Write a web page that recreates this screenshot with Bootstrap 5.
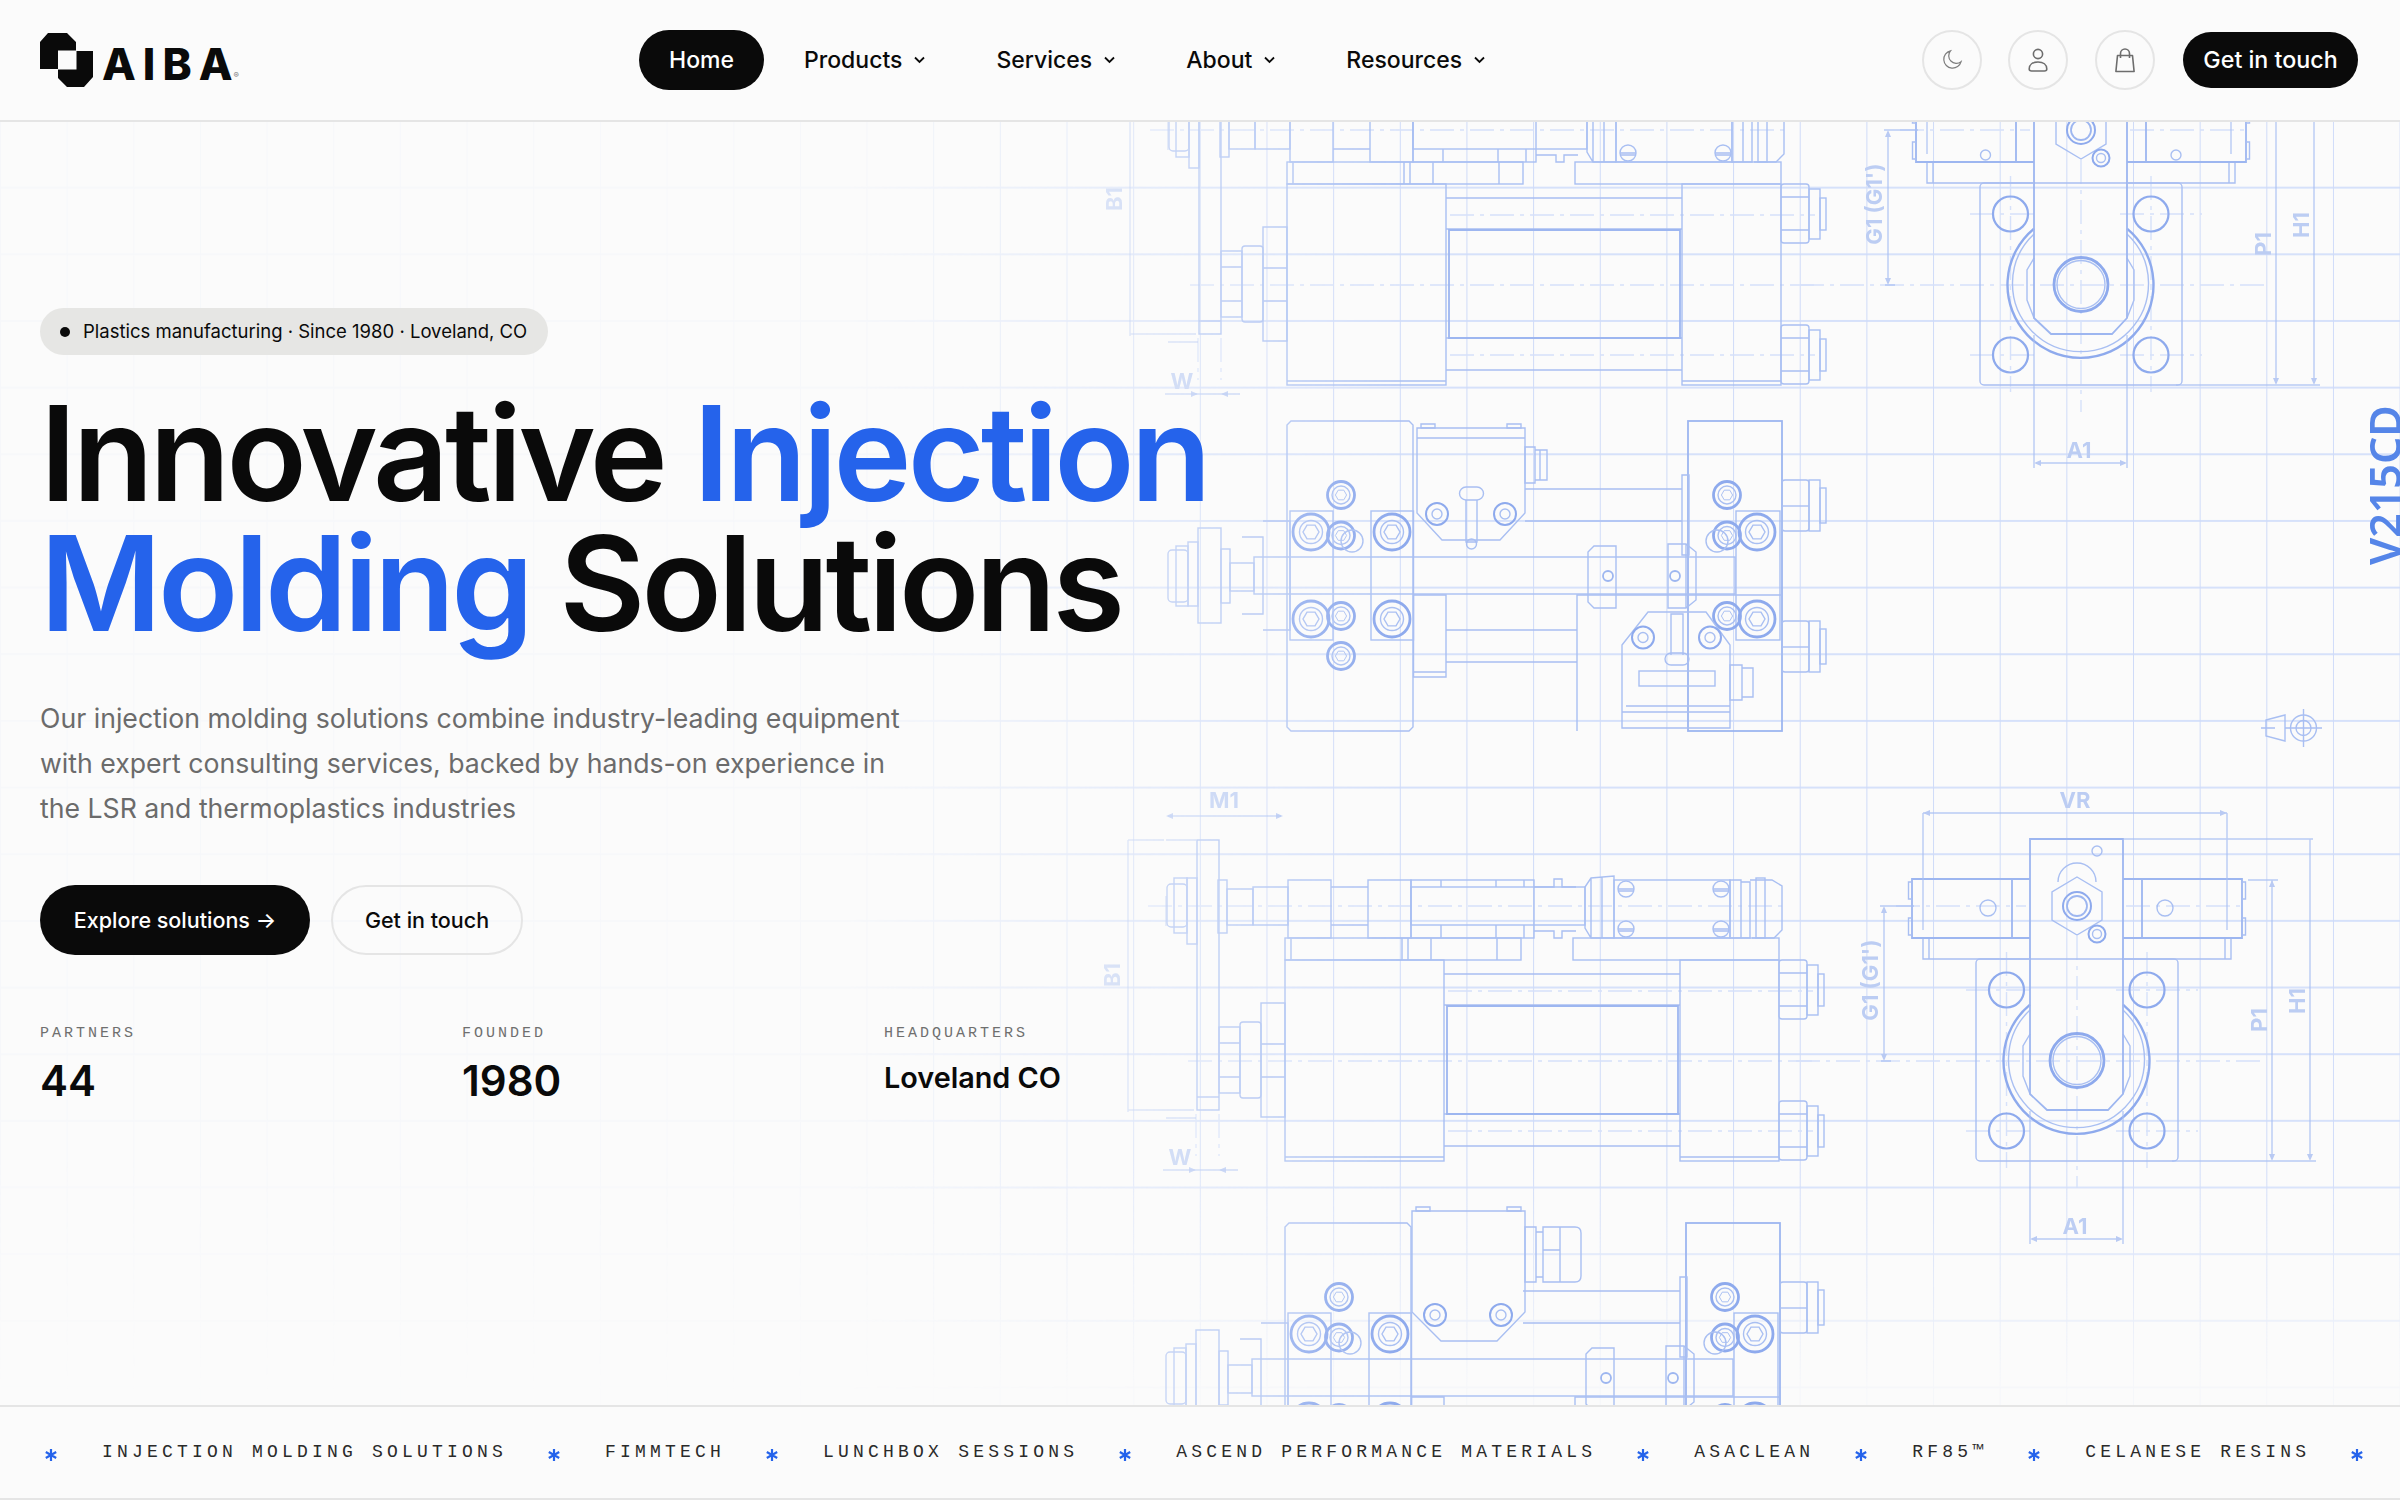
<!DOCTYPE html>
<html lang="en">
<head>
  <meta charset="UTF-8">
  <title>Aiba - Injection Molding Solutions</title>
  <link href="https://cdn.jsdelivr.net/npm/bootstrap@5.3.0/dist/css/bootstrap.min.css" rel="stylesheet">
  <style>
    body { background: #fbfbfb; color: #0a0a0a; font-family: "Inter", "Liberation Sans", sans-serif; overflow: hidden; height: 1500px; }

    .site-nav { height: 122px; border-bottom: 2px solid #e5e5e5; padding: 0 42px 0 40px; flex-wrap: nowrap; }
    .brand-box { width: 599px; gap: 8px; color: #0a0a0a; text-decoration: none; }
    .brand-word { font-size: 44px; font-weight: 800; letter-spacing: 7px; line-height: 44px; margin-top: 8px; }
    .brand-last { letter-spacing: 0; }
    .brand-reg { font-size: 8px; color: #777; letter-spacing: 0; margin-left: -7px; margin-top: 30px; }
    .menu-list { gap: 10px; }
    .navbar-expand .navbar-nav .menu-link { font-size: 23px; font-weight: 500; color: #0a0a0a; height: 60px; padding: 0 30px; border-radius: 30px; gap: 11px; }
    .navbar-expand .navbar-nav .menu-link.is-current { background: #0a0a0a; color: #fff; }
    .round-btn { width: 60px; height: 60px; border: 2px solid #e5e5e5; border-radius: 50%; background: transparent; padding: 0; }
    .tool-group { gap: 26.5px; }
    .btn-ink { background: #0a0a0a; color: #fff; border: 0; font-weight: 500; }
    .btn-ink:hover { background: #0a0a0a; color: #fff; }
    .btn-hollow { background: transparent; color: #0a0a0a; border: 2px solid #e5e5e5; font-weight: 500; }
    .nav-cta { width: 175px; height: 56px; font-size: 23.25px; padding: 0; margin-left: 2px; }

    .hero-area { position: relative; height: 1283px; overflow: hidden; padding: 186px 0 0 40px; }
    .plan-layer { position: absolute; inset: 0; -webkit-mask-image: linear-gradient(to right, rgba(0,0,0,.1) 850px, rgba(0,0,0,.65) 1180px, #000 1400px); mask-image: linear-gradient(to right, rgba(0,0,0,.1) 850px, rgba(0,0,0,.65) 1180px, #000 1400px); }
    .plan-grid { position: absolute; inset: 0; background-image: linear-gradient(to right, #cfdbf8 1px, transparent 1px), linear-gradient(to bottom, #d6e1fa 1.5px, transparent 1.5px); background-size: 66.67px 66.67px; background-position: 0 -2px; -webkit-mask-image: linear-gradient(to bottom, #000 1040px, rgba(0,0,0,.12) 1260px); mask-image: linear-gradient(to bottom, #000 1040px, rgba(0,0,0,.12) 1260px); }
    .plan-svg { position: absolute; left: 0; top: 0; }
    .bl { fill: none; stroke: #a9bff2; stroke-width: 1.4; }
    .bm { fill: none; stroke: #9db6f0; stroke-width: 1.8; }
    .bh { fill: none; stroke: #8eaaed; stroke-width: 2.8; }
    .bd { fill: none; stroke: #d6e1fa; stroke-width: 1.4; stroke-dasharray: 24 6 4 6; }
    .bf { fill: #b9caf3; stroke: none; }
    .bt { fill: #bccdf3; font-family: "Inter", "Liberation Sans", sans-serif; font-weight: 700; font-size: 22px; }
    .bn { fill: #5585e8; font-family: "Noto Sans", "Liberation Sans", sans-serif; font-weight: 600; font-size: 43px; }

    .hero-copy { position: relative; }
    .chip-tag { height: 47px; background: #e6e6e4; border-radius: 24px; padding: 0 20px; gap: 13px; font-size: 18.5px; color: #0a0a0a; width: 508px; white-space: nowrap; }
    .chip-dot { width: 10px; height: 10px; border-radius: 50%; background: #0a0a0a; flex: none; }
    .hero-title { font-size: 132px; font-weight: 600; line-height: 130px; letter-spacing: -3.85px; margin: 33px 0 0 0; white-space: nowrap; }
    .tone-blue { color: #2563eb; }
    .hero-text { font-size: 26.67px; line-height: 45px; color: #6b6b6b; width: 875px; margin: 48px 0 0 0; }
    .hero-actions { gap: 21px; margin-top: 54px; }
    .btn-big { height: 70px; font-size: 21.5px; padding: 0; }
    .btn-explore { width: 270px; }
    .btn-touch { width: 192px; }
    .stat-row { margin-top: 69px; }
    .stat-cell { width: 422px; }
    .stat-label { font-family: "Liberation Mono", monospace; font-size: 15px; letter-spacing: 3px; color: #6f6f6f; line-height: 20px; }
    .stat-value { font-size: 42px; font-weight: 600; line-height: 50px; margin-top: 12px; }
    .stat-value.is-place { font-size: 28.8px; margin-top: 9px; }

    .ticker-band { height: 95px; border-top: 2px solid #e5e5e5; border-bottom: 2px solid #e5e5e5; overflow: hidden; background: #fbfbfb; position: relative; }
    .ticker-track { margin-left: -221px; height: 100%; white-space: nowrap; }
    .ticker-item { font-family: "Liberation Mono", monospace; font-size: 18px; letter-spacing: 4.2px; color: #2a2a2a; }
    .ticker-star { width: 12px; height: 12px; margin: 4px 45px 0 41px; flex: none; }
  </style>
</head>
<body>

<nav class="navbar navbar-expand site-nav">
  <a class="d-flex align-items-center brand-box" href="#">
    <svg width="54" height="56" viewBox="40 32 54 56">
      <polygon fill="#0a0a0a" points="40,42 48,33 67,33 76,42 76,50.5 58,50.5 58,69 40,69"/>
      <polygon fill="#0a0a0a" points="76.5,51 93,51 93,77 84,87 67,87 58,78 58,69.5 76.5,69.5"/>
    </svg>
    <span class="brand-word">AIB<span class="brand-last">A</span></span><span class="brand-reg">®</span>
  </a>
  <ul class="navbar-nav menu-list">
    <li class="nav-item"><a class="nav-link d-flex align-items-center menu-link is-current" href="#">Home</a></li>
    <li class="nav-item"><a class="nav-link d-flex align-items-center menu-link" href="#">Products <svg width="13" height="8" viewBox="0 0 13 8"><path d="M2 1.5l4.500 4.500 4.500-4.500" fill="none" stroke="#0a0a0a" stroke-width="1.8"/></svg></a></li>
    <li class="nav-item"><a class="nav-link d-flex align-items-center menu-link" href="#">Services <svg width="13" height="8" viewBox="0 0 13 8"><path d="M2 1.5l4.500 4.500 4.500-4.500" fill="none" stroke="#0a0a0a" stroke-width="1.8"/></svg></a></li>
    <li class="nav-item"><a class="nav-link d-flex align-items-center menu-link" href="#">About <svg width="13" height="8" viewBox="0 0 13 8"><path d="M2 1.5l4.500 4.500 4.500-4.500" fill="none" stroke="#0a0a0a" stroke-width="1.8"/></svg></a></li>
    <li class="nav-item"><a class="nav-link d-flex align-items-center menu-link" href="#">Resources <svg width="13" height="8" viewBox="0 0 13 8"><path d="M2 1.5l4.500 4.500 4.500-4.500" fill="none" stroke="#0a0a0a" stroke-width="1.8"/></svg></a></li>
  </ul>
  <div class="d-flex align-items-center ms-auto tool-group">
    <button class="round-btn d-flex align-items-center justify-content-center" type="button" aria-label="Theme">
      <svg width="22" height="22" viewBox="0 0 22 22"><path d="M9.5 1.8a8.8 8.8 0 1 0 10.6 10.8A7.6 7.6 0 0 1 9.500 1.800z" fill="none" stroke="#7d7d7d" stroke-width="1.2"/></svg>
    </button>
    <button class="round-btn d-flex align-items-center justify-content-center" type="button" aria-label="Account">
      <svg width="20" height="25" viewBox="0 0 20 25"><circle cx="10" cy="6" r="4.6" fill="none" stroke="#6d6d6d" stroke-width="1.6"/><path d="M1.2 21c0-4.400 3.600-7 8.800-7s8.800 2.600 8.800 7c0 1.600-1 2-2.400 2H3.600c-1.400 0-2.400-.4-2.400-2z" fill="none" stroke="#6d6d6d" stroke-width="1.6"/></svg>
    </button>
    <button class="round-btn d-flex align-items-center justify-content-center" type="button" aria-label="Cart">
      <svg width="22" height="25" viewBox="0 0 22 25"><path d="M3.500 7.500h15l1.600 16H1.900z" fill="none" stroke="#6d6d6d" stroke-width="1.6" stroke-linejoin="round"/><path d="M6.500 10V5.500a4.500 4.500 0 0 1 9 0V10" fill="none" stroke="#6d6d6d" stroke-width="1.6"/></svg>
    </button>
    <a class="btn btn-ink rounded-pill nav-cta d-flex align-items-center justify-content-center" href="#">Get in touch</a>
  </div>
</nav>

<section class="hero-area">
  <div class="plan-layer">
    <div class="plan-grid"></div>
    <svg class="plan-svg" width="2400" height="1283" viewBox="0 122 2400 1283">
      <defs>
        <polygon id="hexHead" points="8,0 4,6.900 -4,6.900 -8,0 -4,-6.900 4,-6.900"/>
        <g id="boltBig"><circle r="18" class="bh"/><circle r="11.5" class="bl"/><use href="#hexHead" class="bl"/></g>
        <g id="boltSmall"><circle r="13.5" class="bh"/><circle r="9" class="bl"/><use href="#hexHead" class="bl" transform="scale(.7)"/></g>
        <g id="nutSide"><rect width="28" height="59" rx="3" class="bl"/><path d="M0 13h28M0 46h28" class="bl"/><rect x="28" y="5" width="11" height="50" class="bl"/><rect x="39" y="14" width="6" height="32" class="bl"/></g>
        <g id="nutTop"><rect width="27" height="51" rx="3" class="bl"/><path d="M0 26h27" class="bl"/><rect x="27" width="11" height="51" class="bl"/><rect x="38" y="8" width="6" height="35" class="bl"/></g>
        <g id="slotScrew"><circle r="8" class="bl"/><path d="M-8 0H8M-8 2H8" class="bl"/></g>
        <g id="valveBolt"><circle r="11" class="bh" style="stroke-width:2"/><circle r="5" class="bl"/></g>

        <!-- side view, upper valve + cylinder -->
        <g id="sideView">
          <path class="bd" d="M1150 130H1790M1190 285H1815M1450 215H1815M1450 355H1815"/>
          <rect class="bl" x="1199" y="64" width="22" height="270"/>
          <path class="bl" d="M1199 321h22"/>
          <rect class="bl" x="1169" y="108" width="20" height="43" rx="4"/>
          <rect class="bl" x="1176" y="102" width="13" height="55"/>
          <rect class="bl" x="1189" y="102" width="10" height="66"/>
          <rect class="bl" x="1220" y="104" width="9" height="53"/>
          <rect class="bl" x="1229" y="113" width="26" height="36"/>
          <rect class="bl" x="1255" y="111" width="35" height="38"/>
          <rect class="bl" x="1290" y="104" width="43" height="58"/>
          <path class="bl" d="M1333 111h37M1333 149h37"/>
          <rect class="bl" x="1370" y="104" width="43" height="58"/>
          <rect class="bl" x="1413" y="104" width="123" height="58"/>
          <rect class="bl" x="1413" y="111" width="174" height="38"/>
          <path class="bl" d="M1443 104v7M1443 149v13M1498 104v7M1498 149v13M1526 104v7M1526 149v13M1536 111h20v-8h8v8h14M1536 155h20v7h8v-7h14"/>
          <path class="bl" d="M1587 111l6-9 23-2v62h-23l-6-10zM1593 102v60M1604 101v61"/>
          <rect class="bl" x="1616" y="104" width="116" height="58"/>
          <use href="#slotScrew" x="1628" y="113"/><use href="#slotScrew" x="1628" y="153"/>
          <use href="#slotScrew" x="1723" y="113"/><use href="#slotScrew" x="1723" y="153"/>
          <path class="bl" d="M1732 104h11v58h-11zM1743 106h9v56h-9zM1752 104h22l10 6v44l-8 8h-22"/>
          <rect class="bl" x="1758" y="102" width="9" height="60"/>

          <rect class="bl" x="1287" y="162" width="236" height="22"/>
          <path class="bl" d="M1293 162v22M1404 162v22M1410 162v22M1433 162v22M1499 162v22"/>
          <rect class="bl" x="1575" y="162" width="206" height="22"/>
          <rect class="bl" x="1287" y="184" width="159" height="201"/>
          <path class="bl" d="M1287 381h159"/>
          <rect class="bl" x="1682" y="184" width="99" height="201"/>
          <path class="bl" d="M1682 381h99M1446 198h236M1446 229h236M1446 338h236M1446 370h236"/>
          <path class="bm" d="M1449 230h231v108h-231z"/>
          <rect class="bl" x="1263" y="227" width="24" height="114"/>
          <path class="bl" d="M1263 268h24M1263 301h24"/>
          <rect class="bl" x="1242" y="246" width="21" height="76" rx="3"/>
          <rect class="bl" x="1221" y="251" width="21" height="66"/>
          <path class="bl" d="M1221 267h21M1221 301h21"/>
          <use href="#nutSide" x="1781" y="184"/><use href="#nutSide" x="1781" y="325"/>
          <path class="bd" d="M1198 338V380M1221 338V380"/>
          <path class="bl" style="opacity:.6" d="M1168 120v30M1168 64h30M1168 342h30"/>
          <path class="bf" d="M1198 394l-7-3v6zM1221 394l7-3v6zM1168 40l7-3v6zM1285 40l-7-3v6z"/>
          <path class="bl" style="opacity:.7" d="M1170 40h113M1165 394h75"/>
          <text class="bt" x="1226" y="32" text-anchor="middle">M1</text>
          <text class="bt" x="1182" y="389" text-anchor="middle">W</text>
          <text class="bt" transform="translate(1122 199) rotate(-90)" text-anchor="middle">B1</text>
          <path class="bl" style="opacity:.6" d="M1130 64V336M1130 64h36M1130 334h66"/>
        </g>

        <!-- top view of the slide, valves are added per copy -->
        <g id="topView">
          <path class="bl" d="M1291 421h118l4 4v302l-4 4h-118l-4-4V425z"/>
          <rect class="bm" x="1688" y="421" width="94" height="310"/>
          <path class="bl" d="M1577 731V595h205"/>
          <rect class="bl" x="1254" y="557" width="481" height="37"/>
          <rect class="bl" x="1290" y="511" width="43" height="129"/>
          <rect class="bl" x="1371" y="511" width="42.500" height="129"/>
          <rect class="bl" x="1736" y="511" width="44" height="129"/>
          <use href="#boltBig" x="1311" y="532"/><use href="#boltBig" x="1392" y="532"/><use href="#boltBig" x="1757" y="532"/>
          <use href="#boltBig" x="1311" y="619"/><use href="#boltBig" x="1392" y="619"/><use href="#boltBig" x="1757" y="619"/>
          <use href="#boltSmall" x="1341" y="495"/><use href="#boltSmall" x="1341" y="535.500"/><use href="#boltSmall" x="1341" y="616"/><use href="#boltSmall" x="1341" y="656"/>
          <use href="#boltSmall" x="1727" y="495"/><use href="#boltSmall" x="1727" y="535.500"/><use href="#boltSmall" x="1727" y="616"/>
          <circle class="bl" cx="1352" cy="541" r="11"/><circle class="bl" cx="1717" cy="541" r="11"/>
          <path class="bl" d="M1525 489h157M1525 521h157M1682 475h7v80h-7z"/>
          <path class="bl" d="M1446 630h131M1446 662h131M1413.500 595h32.500v82h-32.500zM1413 672h33"/>
          <rect class="bl" x="1198" y="528" width="23" height="95"/>
          <rect class="bl" x="1168" y="550" width="20" height="52" rx="4"/>
          <rect class="bl" x="1176" y="546" width="12" height="60"/>
          <rect class="bl" x="1188" y="542" width="10" height="64"/>
          <rect class="bl" x="1221" y="549" width="9" height="54"/>
          <rect class="bl" x="1230" y="563" width="24" height="28"/>
          <path class="bl" d="M1242 537h21v77h-21M1263 521h27v109h-27"/>
          <path class="bl" d="M1588 552l6-6h22v62h-22l-6-6z"/>
          <path class="bl" d="M1668 544h18l10 8v48l-10 8h-18zM1686 544v64"/>
          <circle class="bm" cx="1608" cy="576" r="5"/>
          <circle class="bm" cx="1675" cy="576" r="5"/>
          <use href="#nutTop" x="1782" y="480"/><use href="#nutTop" x="1782" y="621"/>
        </g>

        <!-- end view -->
        <g id="endView">
          <path class="bd" d="M1800 285H2270M2081 160V412M2010.500 176V392M2151 176V392M1970 214h70M2120 214h82M1970 355h70M2120 355h82M1900 130h130M2130 130h115"/>
          <rect class="bl" x="1980" y="183" width="202" height="202" rx="4"/>
          <path class="bh" style="stroke-width:2.400" d="M2127 228.600A73 73 0 1 1 2034 228.600"/>
          <path class="bl" d="M2127 234A68 68 0 1 1 2034 234"/>
          <path class="bl" d="M2034 258l-7 12v30l7 18M2127 258l7 12v30l-7 18"/>
          <path class="bm" d="M2034 63h93v255l-15 16h-61l-17-16z"/>
          <circle class="bh" cx="2081" cy="284.500" r="27"/>
          <circle class="bl" cx="2081" cy="284.500" r="24"/>
          <circle class="bh" style="stroke-width:2.200" cx="2010.500" cy="214" r="17.500"/><circle class="bh" style="stroke-width:2.200" cx="2151" cy="214" r="17.500"/>
          <circle class="bh" style="stroke-width:2.200" cx="2010.500" cy="355" r="17.500"/><circle class="bh" style="stroke-width:2.200" cx="2151" cy="355" r="17.500"/>
          <path class="bl" d="M2034 183h-107v-21h107M2127 183h108v-21h-108M1933 162v21M2229 162v21"/>
          <path class="bm" d="M2034 103h-118v59h118M2127 103h119v59h-119M2016 103v59M2146 103v59"/>
          <path class="bl" d="M1916 106h-3.500v17h3.500M1916 142h-3.500v17h3.500M2246 106h3.500v17h-3.500M2246 142h3.500v17h-3.500"/>
          <polygon class="bl" points="2081,101 2106,116 2106,144 2081,159 2056,144 2056,116"/>
          <path class="bl" d="M2062 106a19 19 0 0 1 38 0"/>
          <circle class="bh" style="stroke-width:2" cx="2081" cy="130" r="14"/><circle class="bm" cx="2081" cy="130" r="10"/>
          <circle class="bl" cx="2101" cy="75" r="5"/>
          <circle class="bh" style="stroke-width:2" cx="2101" cy="158" r="8.500"/><circle class="bl" cx="2101" cy="158" r="4.500"/>
          <path class="bl" style="opacity:.8" d="M2034 335V468M2127 335V468M2036 463h89M2176 385H2320M2276 104V378M2314 63V378M1888 137V278M1885 285h10M1884 130h34M2127 63h190M2252 104h30M1927 37h304M1927 37v117M2231 37v117"/>
          <path class="bf" d="M2034 463l7-3v6zM2127 463l-7-3v6zM2276 385l-3-7h6zM2314 385l-3-7h6zM1888 130l-3 7h6zM1888 285l-3-7h6zM2276 104l-3 7h6zM1927 37l7-3v6zM2231 37l-7-3v6z"/>
          <text class="bt" x="2079" y="458" text-anchor="middle">A1</text>
          <text class="bt" x="2079" y="32" text-anchor="middle">VR</text>
          <text class="bt" transform="translate(2271 244) rotate(-90)" text-anchor="middle">P1</text>
          <text class="bt" transform="translate(2309 225) rotate(-90)" text-anchor="middle">H1</text>
          <text class="bt" transform="translate(1882 204) rotate(-90)" text-anchor="middle">G1 (G1')</text>
        </g>
      </defs>

      <use href="#sideView"/>
      <use href="#topView"/>
      <use href="#endView"/>
      <use href="#sideView" x="-2" y="776"/>
      <use href="#topView" x="-2" y="802"/>
      <use href="#endView" x="-4" y="776"/>

      <!-- valves of the first top view -->
      <path class="bl" d="M1417 428h108v10h-108zM1417 438h108v75l-25 27h-58l-25-27z"/>
      <path class="bl" d="M1421 424h14v4h-14zM1507 424h14v4h-14z"/>
      <use href="#valveBolt" x="1437" y="514"/><use href="#valveBolt" x="1505" y="514"/>
      <rect class="bl" x="1459.500" y="487" width="24" height="13" rx="6.500"/>
      <path class="bl" d="M1466 500v42h11v-42"/>
      <circle class="bl" cx="1471.500" cy="544" r="5"/>
      <path class="bl" d="M1525 447h10v36h-10zM1535 450h12v30h-12zM1540 450v30"/>
      <path class="bl" d="M1622 645l26-33h58l24 33v67h-108zM1622 712h108v16h-108zM1626 706h104"/>
      <rect class="bl" x="1639" y="671" width="76" height="15"/>
      <use href="#valveBolt" x="1643" y="637.500"/><use href="#valveBolt" x="1710" y="637.500"/>
      <path class="bl" d="M1671 655v-41h12v41"/>
      <rect class="bl" x="1665" y="653" width="24" height="12" rx="6"/>
      <path class="bl" d="M1730 665h12v35h-12zM1742 668h11v29h-11z"/>

      <!-- valve of the second top view -->
      <path class="bl" d="M1412 1211h113v101l-28 29h-56l-29-29z"/>
      <path class="bl" d="M1416 1207h14v4h-14zM1507 1207h14v4h-14z"/>
      <use href="#valveBolt" x="1435" y="1315"/><use href="#valveBolt" x="1501" y="1315"/>
      <path class="bl" d="M1525 1227h11v55h-11zM1543 1227h17v55h-17zM1560 1227h15q6 0 6 6v43q0 6-6 6h-15M1536 1232h7v45h-7zM1543 1250h17"/>

      <!-- holes that differ per copy -->
      <circle class="bl" cx="1985.500" cy="155" r="5"/><circle class="bl" cx="2176" cy="155" r="5"/>
      <circle class="bl" cx="1988" cy="908" r="8"/><circle class="bl" cx="2165" cy="908" r="8"/>

      <path class="bl" d="M2266 720l19-5v26l-19-5zM2261 728h14"/>
      <circle class="bl" cx="2303.500" cy="728" r="13"/><circle class="bl" cx="2303.500" cy="728" r="7.500"/>
      <path class="bl" d="M2285 728h37M2303.500 709v38"/>
      <text class="bn" transform="translate(2401 565) rotate(-90)">V215CD</text>
    </svg>
  </div>

  <div class="hero-copy">
    <div class="chip-tag d-flex align-items-center"><span class="chip-dot"></span>Plastics manufacturing · Since 1980 · Loveland, CO</div>
    <h1 class="hero-title">Innovative <span class="tone-blue">Injection</span><br><span class="tone-blue">Molding</span> Solutions</h1>
    <p class="hero-text">Our injection molding solutions combine industry-leading equipment with expert consulting services, backed by hands-on experience in the LSR and thermoplastics industries</p>
    <div class="d-flex hero-actions">
      <a class="btn btn-ink rounded-pill btn-big btn-explore d-flex align-items-center justify-content-center" href="#">Explore solutions →</a>
      <a class="btn btn-hollow rounded-pill btn-big btn-touch d-flex align-items-center justify-content-center" href="#">Get in touch</a>
    </div>
    <div class="d-flex stat-row">
      <div class="stat-cell"><div class="stat-label">PARTNERS</div><div class="stat-value">44</div></div>
      <div class="stat-cell"><div class="stat-label">FOUNDED</div><div class="stat-value">1980</div></div>
      <div class="stat-cell"><div class="stat-label">HEADQUARTERS</div><div class="stat-value is-place">Loveland CO</div></div>
    </div>
  </div>
</section>

<div class="ticker-band">
  <div class="d-flex align-items-center ticker-track">
    <span class="ticker-item">CELANESE RESINS</span>
    <svg class="ticker-star" viewBox="0 0 12 12"><path d="M6 0v12M.8 3l10.400 6M.8 9l10.400-6" stroke="#2563eb" stroke-width="2.200"/></svg>
    <span class="ticker-item">INJECTION MOLDING SOLUTIONS</span>
    <svg class="ticker-star" viewBox="0 0 12 12"><path d="M6 0v12M.8 3l10.400 6M.8 9l10.400-6" stroke="#2563eb" stroke-width="2.200"/></svg>
    <span class="ticker-item">FIMMTECH</span>
    <svg class="ticker-star" viewBox="0 0 12 12"><path d="M6 0v12M.8 3l10.400 6M.8 9l10.400-6" stroke="#2563eb" stroke-width="2.200"/></svg>
    <span class="ticker-item">LUNCHBOX SESSIONS</span>
    <svg class="ticker-star" viewBox="0 0 12 12"><path d="M6 0v12M.8 3l10.400 6M.8 9l10.400-6" stroke="#2563eb" stroke-width="2.200"/></svg>
    <span class="ticker-item">ASCEND PERFORMANCE MATERIALS</span>
    <svg class="ticker-star" viewBox="0 0 12 12"><path d="M6 0v12M.8 3l10.400 6M.8 9l10.400-6" stroke="#2563eb" stroke-width="2.200"/></svg>
    <span class="ticker-item">ASACLEAN</span>
    <svg class="ticker-star" viewBox="0 0 12 12"><path d="M6 0v12M.8 3l10.400 6M.8 9l10.400-6" stroke="#2563eb" stroke-width="2.200"/></svg>
    <span class="ticker-item">RF85™</span>
    <svg class="ticker-star" viewBox="0 0 12 12"><path d="M6 0v12M.8 3l10.400 6M.8 9l10.400-6" stroke="#2563eb" stroke-width="2.200"/></svg>
    <span class="ticker-item">CELANESE RESINS</span>
    <svg class="ticker-star" viewBox="0 0 12 12"><path d="M6 0v12M.8 3l10.400 6M.8 9l10.400-6" stroke="#2563eb" stroke-width="2.200"/></svg>
  </div>
</div>

<script src="https://cdn.jsdelivr.net/npm/bootstrap@5.3.0/dist/js/bootstrap.bundle.min.js"></script>
</body>
</html>
